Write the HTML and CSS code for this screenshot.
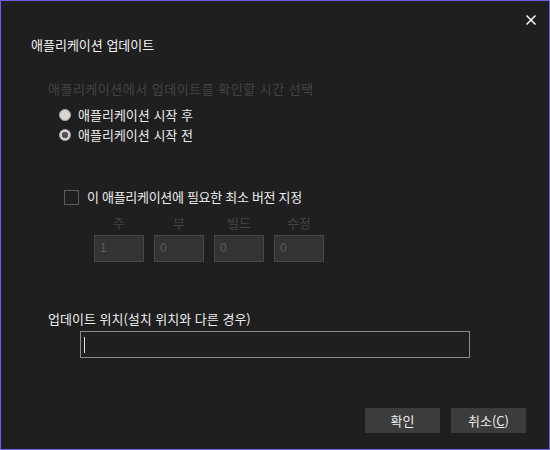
FILE: index.html
```html
<!DOCTYPE html>
<html lang="ko">
<head>
<meta charset="utf-8">
<title>애플리케이션 업데이트</title>
<link rel="stylesheet" href="styles.css">
</head>
<body>
<div class="window">
  <button class="close" aria-label="닫기">
    <svg width="10" height="10" viewBox="0 0 10 10"><path d="M0.5 0.5L9.5 9.5M9.5 0.5L0.5 9.5" stroke="#ffffff" stroke-width="1.5" fill="none"/></svg>
  </button>
  <div class="title">애플리케이션 업데이트</div>
  <div class="group-label">애플리케이션에서 업데이트를 확인할 시간 선택</div>
  <div class="radios">
    <div class="radio-row"><span class="radio"></span><span class="opt">애플리케이션 시작 후</span></div>
    <div class="radio-row"><span class="radio checked"></span><span class="opt">애플리케이션 시작 전</span></div>
  </div>
  <div class="check-row"><span class="checkbox"></span><span class="opt check-text">이 애플리케이션에 필요한 최소 버전 지정</span></div>
  <div class="version">
    <div class="vcol"><div class="vlabel">주</div><div class="vbox">1</div></div>
    <div class="vcol"><div class="vlabel">부</div><div class="vbox">0</div></div>
    <div class="vcol"><div class="vlabel">빌드</div><div class="vbox">0</div></div>
    <div class="vcol"><div class="vlabel">수정</div><div class="vbox">0</div></div>
  </div>
  <div class="loc-label">업데이트 위치(설치 위치와 다른 경우)</div>
  <div class="loc-input"><span class="caret"></span></div>
  <div class="buttons">
    <div class="btn">확인</div>
    <div class="btn">취소(<u>C</u>)</div>
  </div>
</div>
</body>
</html>
```
FILE: styles.css
```css
html, body {
  margin: 0;
  padding: 0;
  background: #1f1f1f;
}
.window {
  position: relative;
  width: 550px;
  height: 450px;
  box-sizing: border-box;
  border: 1px solid #6d5ee6;
  background: #1f1f1f;
  font-family: "Noto Sans CJK KR", "Noto Sans", sans-serif;
  font-size: 13px;
  line-height: 16px;
  color: #ececec;
  overflow: hidden;
}
.close {
  position: absolute;
  top: 14px;
  right: 13px;
  width: 10px;
  height: 10px;
  padding: 0;
  border: 0;
  background: none;
  display: block;
}
.close svg { display: block; }
.title {
  margin: 36px 0 0 30px;
  color: #f2f2f2;
}
.group-label {
  margin: 28px 0 0 47px;
  color: #434343;
  letter-spacing: 0.5px;
}
.radios {
  margin: 10px 0 0 58px;
  display: flex;
  flex-direction: column;
  gap: 4px;
}
.radio-row, .check-row {
  display: flex;
  align-items: center;
  height: 16px;
}
.radio {
  width: 12px;
  height: 12px;
  box-sizing: border-box;
  border-radius: 50%;
  background: #d6d6d6;
  border: 1px solid #a8a8a8;
  margin-right: 7px;
  position: relative;
}
.radio.checked {
  background: radial-gradient(circle, #555555 0 3px, #d6d6d6 3.5px);
}
.check-row {
  margin: 46px 0 0 63px;
}
.checkbox {
  width: 15px;
  height: 15px;
  box-sizing: border-box;
  border: 1px solid #5c5c5c;
  margin-right: 8px;
}
.check-text {
  letter-spacing: -0.3px;
}
.version {
  margin: 10px 0 0 93px;
  display: flex;
  gap: 10px;
}
.vcol {
  display: flex;
  flex-direction: column;
  align-items: center;
  gap: 4px;
}
.vlabel {
  color: #434343;
}
.vbox {
  width: 50px;
  height: 27px;
  box-sizing: border-box;
  background: #333333;
  border: 1px solid #474747;
  color: #5c5c5c;
  padding-left: 5px;
  line-height: 25px;
  font-family: "Liberation Sans", sans-serif;
  font-size: 12px;
  align-self: stretch;
}
.loc-label {
  margin: 49px 0 0 47px;
  color: #ececec;
}
.loc-input {
  margin: 4px 0 0 79px;
  width: 390px;
  height: 27px;
  box-sizing: border-box;
  border: 1px solid #8a8a8a;
  display: flex;
  align-items: center;
  padding-left: 3px;
}
.caret {
  width: 1px;
  height: 16px;
  background: #e0e0e0;
}
.buttons {
  margin: 50px 23px 0 0;
  display: flex;
  justify-content: flex-end;
  gap: 11px;
}
.btn {
  width: 75px;
  height: 25px;
  background: #3c3c3c;
  color: #ececec;
  text-align: center;
  line-height: 25px;
}
.btn u {
  text-underline-offset: 1px;
}
```
